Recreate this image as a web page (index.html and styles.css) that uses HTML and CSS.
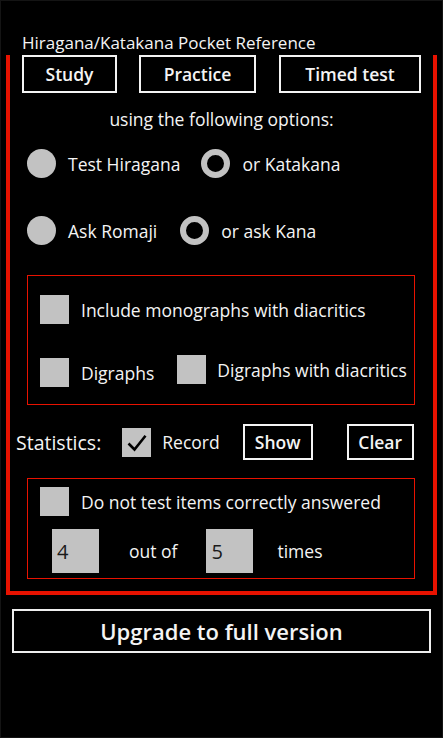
FILE: index.html
```html
<!DOCTYPE html>
<html>
<head>
<meta charset="utf-8">
<link rel="stylesheet" href="styles.css">
</head>
<body>
<div class="page">
  <div class="title">Hiragana/Katakana Pocket Reference</div>
  <div class="frame">
    <div class="modes">
      <div class="btn btn-study">Study</div>
      <div class="btn btn-practice">Practice</div>
      <div class="btn btn-timed">Timed test</div>
    </div>
    <div class="using">using the following options:</div>
    <div class="radio-row row1">
      <span class="radio"></span><span class="lbl lbl-a1">Test Hiragana</span>
      <span class="radio on"></span><span class="lbl">or Katakana</span>
    </div>
    <div class="radio-row row2">
      <span class="radio"></span><span class="lbl lbl-a2">Ask Romaji</span>
      <span class="radio on"></span><span class="lbl">or ask Kana</span>
    </div>
    <div class="box box-kana">
      <div class="chk-row first">
        <span class="chk"></span><span class="lbl">Include monographs with diacritics</span>
      </div>
      <div class="chk-row second">
        <span class="chk"></span><span class="lbl lbl-dig">Digraphs</span>
        <span class="chk up"></span><span class="lbl up">Digraphs with diacritics</span>
      </div>
    </div>
    <div class="stats">
      <span class="stats-lbl">Statistics:</span>
      <span class="chk checked"><svg width="29" height="29" viewBox="0 0 29 29"><path d="M6.5 15.5 L12.5 21.5 L23.5 7.8" fill="none" stroke="#000" stroke-width="2.6"/></svg></span>
      <span class="lbl lbl-rec">Record</span>
      <div class="btn btn-show">Show</div>
      <div class="btn btn-clear">Clear</div>
    </div>
    <div class="box box-stats">
      <div class="chk-row third">
        <span class="chk"></span><span class="lbl">Do not test items correctly answered</span>
      </div>
      <div class="count-row">
        <span class="num">4</span><span class="lbl lbl-out">out of</span>
        <span class="num">5</span><span class="lbl lbl-times">times</span>
      </div>
    </div>
  </div>
  <div class="upgrade">Upgrade to full version</div>
</div>
</body>
</html>
```

FILE: styles.css
```css
* { box-sizing: border-box; }
html, body {
  margin: 0;
  padding: 0;
  background: #000;
}
body {
  width: 443px;
  height: 738px;
  overflow: hidden;
  color: #f4f4f4;
  font-family: "Open Sans", "Noto Sans", sans-serif;
}
.page {
  height: 738px;
  border: 1px solid #141414;
  padding-top: 30px;
}
.title {
  font-size: 17px;
  line-height: 24px;
  padding-left: 21px;
  height: 24px;
}
.frame {
  margin: 0 5px;
  border: 4px solid #e81200;
  border-top: none;
  height: 540px;
  display: flex;
  flex-direction: column;
}
.modes {
  display: flex;
  padding-left: 12px;
  height: 38px;
}
.btn {
  border: 2px solid #f4f4f4;
  font-weight: 600;
  font-size: 17.5px;
  display: flex;
  align-items: center;
  justify-content: center;
}
.btn-study { width: 95px; }
.btn-practice { width: 117px; margin-left: 22px; }
.btn-timed { width: 142px; margin-left: 23px; }
.using {
  text-align: center;
  font-size: 17.5px;
  line-height: 24px;
  margin-top: 14px;
}
.radio-row {
  display: flex;
  align-items: center;
  height: 29px;
  padding-left: 17px;
  font-size: 17.5px;
}
.row1 { margin-top: 18px; }
.row2 { margin-top: 38px; }
.radio {
  width: 29px;
  height: 29px;
  border-radius: 50%;
  background: #c2c2c2;
  flex: none;
}
.radio.on {
  background: #000;
  border: 6px solid #c2c2c2;
}
.lbl { margin-left: 12px; white-space: nowrap; }
.lbl-a1 { margin-right: 21px; }
.lbl-a2 { margin-right: 23px; }
.box {
  margin: 0 18px 0 17px;
  border: 1.5px solid #e81200;
}
.box-kana {
  margin-top: 30px;
  height: 130px;
  padding: 19px 0 0 12px;
}
.chk-row {
  display: flex;
  align-items: center;
  font-size: 17.5px;
}
.chk {
  width: 29px;
  height: 29px;
  background: #c2c2c2;
  flex: none;
  display: block;
}
.second { margin-top: 34px; }
.second .chk.up { margin-left: 23px; position: relative; top: -3px; }
.second .lbl.up { position: relative; top: -3px; margin-left: 11px; }
.stats {
  display: flex;
  align-items: center;
  height: 36px;
  margin-top: 19px;
  padding-left: 6px;
}
.stats-lbl { font-size: 19.5px; }
.stats .chk { margin-left: 21px; }
.lbl-rec { font-size: 17.5px; margin-left: 11px; }
.btn-show { width: 70px; height: 36px; margin-left: 23px; font-size: 17.5px; }
.btn-clear { width: 67px; height: 36px; margin-left: 34px; font-size: 17.5px; }
.box-stats {
  margin-top: 18px;
  height: 101px;
  padding: 8px 0 0 12px;
}
.count-row {
  display: flex;
  align-items: center;
  margin-top: 13px;
  padding-left: 12px;
  font-size: 17.5px;
}
.num {
  width: 47px;
  height: 44px;
  background: #c2c2c2;
  color: #1a1a1a;
  font-size: 20px;
  padding-left: 5px;
  display: flex;
  align-items: center;
}
.count-row .lbl { margin-left: 30px; }
.count-row .lbl-out { margin-right: 29px; }
.count-row .lbl-times { margin-left: 24px; }
.upgrade {
  margin: 14px 11px 0 11px;
  height: 44px;
  border: 2px solid #eeeeee;
  font-size: 22px;
  font-weight: 600;
  display: flex;
  align-items: center;
  justify-content: center;
}
```
